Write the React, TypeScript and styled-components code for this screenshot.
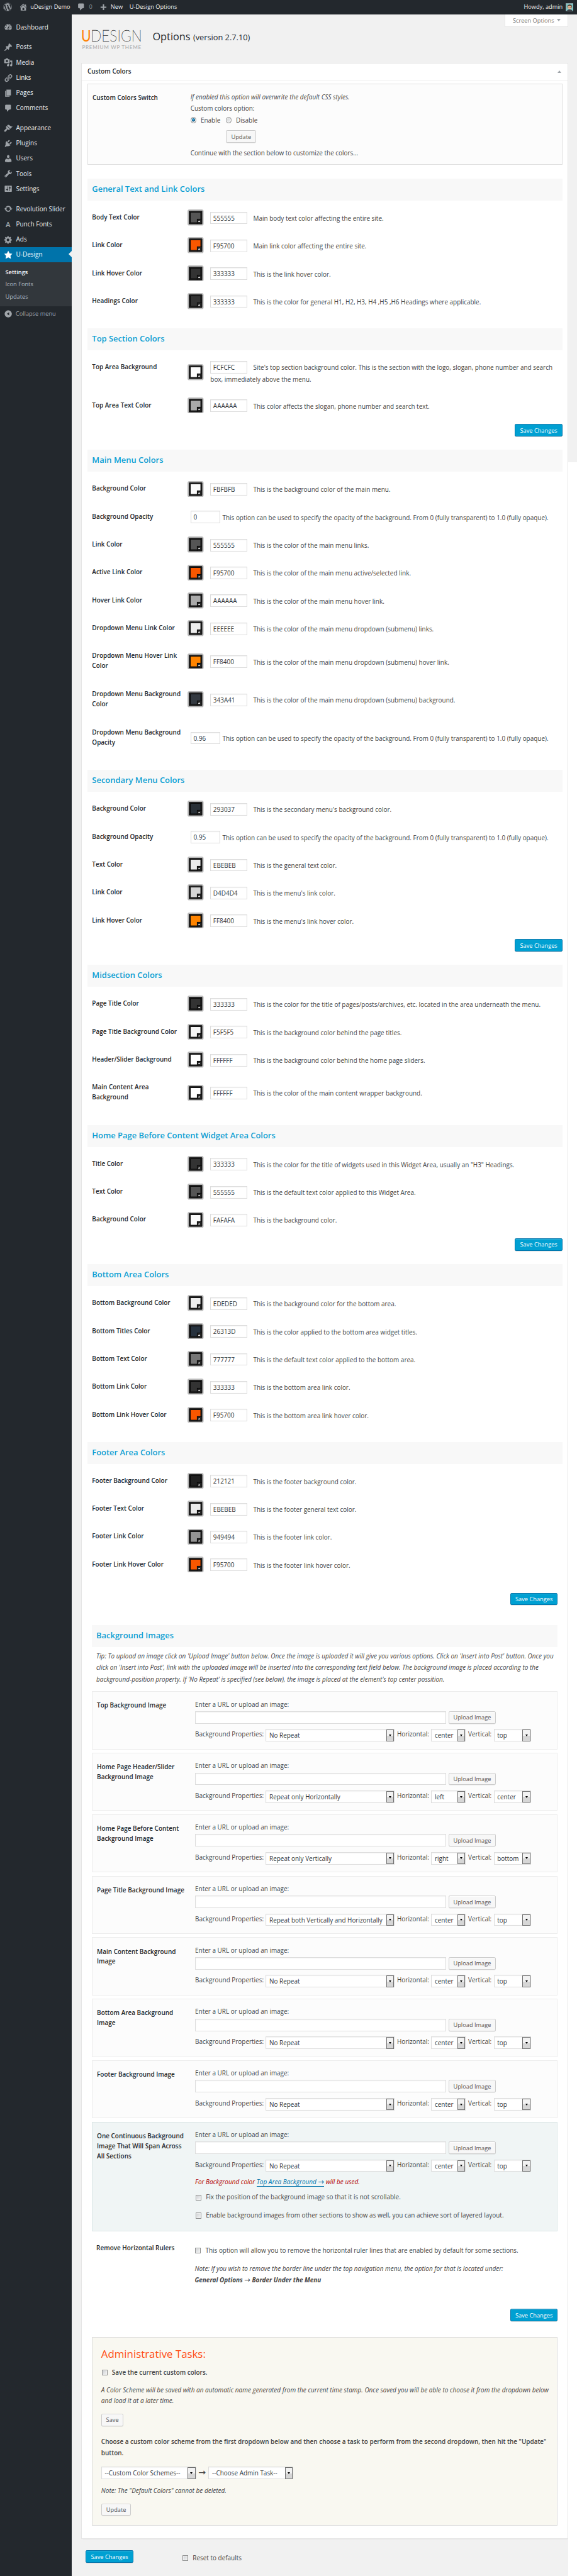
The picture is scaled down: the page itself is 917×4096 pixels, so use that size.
import React from "react";
import styled, { createGlobalStyle, css } from "styled-components";
import { FaWordpress } from "react-icons/fa";

const GlobalStyle = createGlobalStyle`
  * { box-sizing: border-box; }
  html, body { margin: 0; padding: 0; background: #fff; }
  body { overflow: hidden; }
`;

/* ---------- page frame ---------- */

const Page = styled.div`
  zoom: 0.710853;
  width: 1290px;
  height: 5762px;
  display: flex;
  flex-direction: column;
  overflow: hidden;
  background: #fff;
  color: #444;
  font-family: "Open Sans", "Liberation Sans", sans-serif;
  font-size: 14px;
  line-height: 22px;
`;

const AdminBar = styled.header`
  height: 32px;
  flex: none;
  display: flex;
  align-items: center;
  background: #23282d;
  color: #eee;
  font-size: 13px;
  line-height: 32px;
  padding: 0 8px 0 7px;
  white-space: nowrap;
`;

const BarItem = styled.div<{ $gap: number; $muted?: boolean }>`
  display: flex;
  align-items: center;
  height: 32px;
  margin-left: ${(p) => p.$gap}px;
  color: ${(p) => (p.$muted ? "#888d92" : "#eee")};
  svg { color: #9ea3a8; flex: none; }
`;

const BarSpacer = styled.div`
  flex: 1;
`;

const Avatar = styled.svg`
  margin-left: 6px;
  margin-top: 1px;
  flex: none;
`;

const Columns = styled.div`
  flex: 1;
  display: flex;
  align-items: stretch;
`;

const Sidebar = styled.nav`
  width: 160px;
  flex: none;
  padding-top: 12px;
  background: #23282d;
`;

const MenuItem = styled.div<{ $active?: boolean; $first?: boolean }>`
  position: relative;
  height: 34px;
  display: flex;
  align-items: center;
  padding-left: 8px;
  gap: 8px;
  margin-top: ${(p) => (p.$first ? 11 : 0)}px;
  color: ${(p) => (p.$active ? "#fff" : "#eee")};
  background: ${(p) => (p.$active ? "#0073aa" : "transparent")};
  white-space: nowrap;
  svg { flex: none; color: ${(p) => (p.$active ? "#fff" : "#9ea3a8")}; }
  ${(p) =>
    p.$active &&
    css`
      &::after {
        content: "";
        position: absolute;
        right: 0;
        top: 9px;
        border: 8px solid transparent;
        border-left-width: 0;
        border-right-color: #f1f1f1;
      }
    `}
`;

const LetterIcon = styled.span`
  width: 20px;
  text-align: center;
  font-size: 16px;
  font-weight: 600;
  color: #9ea3a8;
`;

const SubMenu = styled.div`
  height: 98px;
  padding: 8px 12px 0;
  background: #32373c;
  font-size: 13px;
`;

const SubItem = styled.div<{ $current?: boolean }>`
  height: 27.7px;
  line-height: 27px;
  color: ${(p) => (p.$current ? "#fff" : "#b4b9be")};
  font-weight: ${(p) => (p.$current ? 600 : 400)};
`;

const Collapse = styled.div`
  height: 34px;
  display: flex;
  align-items: center;
  gap: 7px;
  padding-left: 8px;
  font-size: 13px;
  color: #a0a5aa;
  svg { flex: none; }
`;

const Main = styled.main`
  width: 1111px;
  flex: none;
  padding-left: 22px;
  background: #f1f1f1;
`;

const Gutter = styled.div`
  flex: 1;
  &::before {
    content: "";
    display: block;
    height: 1002px;
    background: #f1f1f1;
  }
`;

const Masthead = styled.div`
  height: 109px;
  width: 1088px;
  display: flex;
  align-items: flex-start;
`;

const Logo = styled.svg`
  margin-top: 21px;
  flex: none;
`;

const Title = styled.h1`
  margin: 35px 0 0 21px;
  flex: 1;
  font-size: 23px;
  line-height: 29px;
  font-weight: 400;
  color: #23282d;
  span { font-size: 18px; }
`;

const ScreenOptions = styled.div`
  width: 142px;
  height: 29px;
  border: 1px solid #e5e5e5;
  border-top: 0;
  background: #fff;
  color: #777;
  font-size: 13px;
  line-height: 28px;
  padding-left: 17px;
  white-space: nowrap;
`;

const Arrow = styled.span<{ $up?: boolean }>`
  display: inline-block;
  width: 0;
  height: 0;
  border: 4.5px solid transparent;
  border-top: ${(p) => (p.$up ? "0" : "7px solid #a0a5aa")};
  border-bottom: ${(p) => (p.$up ? "6px solid #a0a5aa" : "0")};
  margin-left: 6px;
  vertical-align: 2px;
`;

/* ---------- panel ---------- */

const Panel = styled.section`
  width: 1088px;
  height: 5538px;
  border: 1px solid #e5e5e5;
  box-shadow: 0 1px 1px rgba(0, 0, 0, 0.04);
  background: #fff;
`;

const PanelHead = styled.div`
  height: 37px;
  display: flex;
  align-items: center;
  justify-content: space-between;
  padding: 0 14px 0 12px;
  border-bottom: 1px solid #eee;
  font-weight: 600;
  color: #23282d;
`;

const PanelBody = styled.div`
  width: 1062px;
  margin: 8px 0 0 12px;
`;

const SwitchBox = styled.div`
  height: 181.5px;
  margin-bottom: 30.5px;
  border: 1px solid #dfdfdf;
  background: #fcfcfc;
  display: flex;
`;

const Label = styled.div<{ $top?: number }>`
  width: 205px;
  flex: none;
  padding-top: ${(p) => p.$top ?? 20}px;
  line-height: 22.4px;
  font-weight: 600;
  color: #23282d;
`;

const SwitchLabel = styled(Label)`
  margin-left: 10px;
  margin-right: 14px;
`;

const SwitchBody = styled.div`
  padding-top: 15px;
  line-height: 26px;
`;

const Em = styled.div`
  font-style: italic;
  letter-spacing: 0.05px;
`;

const Radio = styled.span<{ $on?: boolean }>`
  display: inline-block;
  width: 13px;
  height: 13px;
  margin: 0 10px 0 ${(p) => (p.$on ? 0 : 12)}px;
  border: 1px solid #8e8f8f;
  border-radius: 50%;
  vertical-align: -1px;
  box-shadow: inset 0 0 0 1.5px #f4f4f4;
  background: ${(p) =>
    p.$on
      ? "radial-gradient(circle at 45% 40%, #5cc5ef 0, #1b7fb3 25%, #0b3f63 46%, #f0f0f0 58%)"
      : "linear-gradient(135deg, #cdd0d3, #f8f8f8)"};
`;

const Check = styled.span`
  display: inline-block;
  width: 13px;
  height: 13px;
  flex: none;
  margin: 0 10px 0 1px;
  border: 1px solid #8e8f8f;
  vertical-align: -1px;
  box-shadow: inset 0 0 0 1px #f4f4f4;
  background: linear-gradient(135deg, #cdd0d3, #f6f6f6);
`;

const Button = styled.button<{ $w: number; $primary?: boolean }>`
  display: block;
  flex: none;
  width: ${(p) => p.$w}px;
  height: 28px;
  padding: 0;
  border: 1px solid ${(p) => (p.$primary ? "#0073aa" : "#ccc")};
  border-radius: 3px;
  background: ${(p) => (p.$primary ? "#00a0d2" : "#f7f7f7")};
  box-shadow: ${(p) =>
    p.$primary
      ? "inset 0 1px 0 rgba(120,200,230,.5), 0 1px 0 rgba(0,0,0,.15)"
      : "inset 0 1px 0 #fff, 0 1px 0 rgba(0,0,0,.08)"};
  color: ${(p) => (p.$primary ? "#fff" : "#555")};
  font-family: inherit;
  font-size: 13px;
  line-height: 24px;
  white-space: nowrap;
`;

const SwitchButton = styled(Button)`
  margin: 10px 0 9px 80px;
`;

const SectionTitle = styled.h4<{ $indent?: number }>`
  height: 49px;
  margin: 0 0 7px;
  padding-left: ${(p) => p.$indent ?? 10.5}px;
  background: #f8f8f8;
  color: #0d9fd3;
  font-size: 18.2px;
  line-height: 47.5px;
  font-weight: 600;
`;

const Row = styled.div<{ $tall?: boolean }>`
  display: flex;
  height: ${(p) => (p.$tall ? 85.33 : 62.36)}px;
  padding-left: 10.5px;
`;

const Cell = styled.div`
  flex: 1;
  display: flex;
  align-items: center;
  padding-left: 8.5px;
`;

const CellText = styled.div<{ $opacity?: boolean }>`
  margin-top: 2px;
  margin-left: ${(p) => (p.$opacity ? 7 : 15)}px;
  flex: 1;
  line-height: 25px;
  padding-right: 10px;
`;

const Field = styled.span<{ $w: number; $gap: number }>`
  display: inline-block;
  width: ${(p) => p.$w}px;
  height: 28px;
  margin: 1px ${(p) => p.$gap}px 1px 0;
  padding-left: 5px;
  border: 1px solid #ddd;
  box-shadow: inset 0 1px 2px rgba(0, 0, 0, 0.07);
  background: #fff;
  color: #32373c;
  line-height: 26px;
  vertical-align: baseline;
`;

const SaveRow = styled.div<{ $top: number; $bottom: number }>`
  display: flex;
  justify-content: flex-end;
  margin-top: ${(p) => p.$top}px;
  margin-bottom: ${(p) => p.$bottom}px;
`;

const SectionGap = styled.div`
  height: 29.6px;
`;

/* ---------- background images ---------- */

const Inset = styled.div`
  width: 1042px;
  margin-left: 9.5px;
`;

const Tip = styled.p`
  margin: 2px 6px 15px 10.5px;
  font-style: italic;
  letter-spacing: 0.05px;
  line-height: 25.5px;
`;

const ImageBox = styled.div<{ $tint?: boolean }>`
  height: ${(p) => (p.$tint ? 245 : 130)}px;
  margin-bottom: 7.55px;
  display: flex;
  padding-left: 10.5px;
  border: 1px solid ${(p) => (p.$tint ? "#dbe6e6" : "#ececec")};
  background: ${(p) => (p.$tint ? "#f0f5f5" : "#fcfcfc")};
`;

const ImageControls = styled.div`
  flex: 1;
  padding: 16px 0 0 14.5px;
  line-height: 25px;
`;

const Line = styled.div<{ $top?: number }>`
  display: flex;
  align-items: center;
  height: 28px;
  margin-top: ${(p) => p.$top ?? 0}px;
  white-space: nowrap;
`;

const UrlField = styled(Field)`
  margin: 0 5px 0 0.5px;
`;

const Caption = styled.span<{ $w: number }>`
  width: ${(p) => p.$w}px;
  margin-top: -3px;
`;

const SelectBox = styled.span<{ $w: number; $gap?: number }>`
  display: flex;
  width: ${(p) => p.$w}px;
  height: 28px;
  margin-right: ${(p) => p.$gap ?? 5}px;
  padding-left: 6.5px;
  border: 1px solid #ddd;
  box-shadow: inset 0 1px 2px rgba(0, 0, 0, 0.07);
  background: #fff;
  color: #32373c;
  line-height: 26px;
  white-space: nowrap;
`;

const SelectText = styled.span`
  flex: 1;
`;

const SelectArrow = styled.span`
  width: 18px;
  height: 26px;
  flex: none;
  display: flex;
  align-items: center;
  justify-content: center;
  border: 1px solid #707070;
  background: linear-gradient(#f2f2f2 50%, #d6d6d6 51%);
  &::before {
    content: "";
    border: 4px solid transparent;
    border-top: 5px solid #000;
    border-bottom: 0;
  }
`;

const InlineArrow = styled.span`
  display: inline-block;
  font-family: "DejaVu Sans", sans-serif;
  font-size: 16px;
  font-style: normal;
  font-weight: 400;
  line-height: 16px;
`;

const Warning = styled.div`
  margin-top: 11px;
  font-style: italic;
  letter-spacing: 0.05px;
  color: #b00000;
  a {
    color: #0073aa;
    border-bottom: 1px solid #0073aa;
    display: inline-block;
    line-height: 17px;
  }
`;

const CheckLine = styled.div<{ $top: number }>`
  display: flex;
  align-items: center;
  height: 25px;
  margin-top: ${(p) => p.$top}px;
  white-space: nowrap;
`;

const Rulers = styled.div`
  display: flex;
  height: 166px;
  padding-left: 10.5px;
`;

const RulersBody = styled.div`
  padding: 23px 0 0 15px;
  line-height: 25px;
`;

const Note = styled.div<{ $top?: number; $bold?: boolean }>`
  margin-top: ${(p) => p.$top ?? 0}px;
  font-style: italic;
  letter-spacing: ${(p) => (p.$bold ? 0 : 0.05)}px;
  font-weight: ${(p) => (p.$bold ? 700 : 400)};
`;

/* ---------- administrative tasks ---------- */

const AdminBox = styled.div`
  height: 421.5px;
  padding: 21px 18px 0 20px;
  border: 1px solid #ddd;
  background: #f9f8f1;
  line-height: 25px;
`;

const AdminTitle = styled.h2`
  margin: 0;
  font-size: 23.7px;
  font-weight: 400;
  line-height: 30px;
  color: #ff4b12;
`;

const Strong = styled.div`
  font-weight: 600;
`;

const Arrowed = styled.span`
  width: 29px;
  margin-left: -1px;
  text-align: center;
  font-size: 20px;
  font-family: "DejaVu Sans", sans-serif;
`;

const Block = styled.div<{ $top: number }>`
  margin-top: ${(p) => p.$top}px;
`;

const FooterBar = styled.div`
  display: flex;
  align-items: flex-start;
  margin: 26px 0 0 10px;
  > div { margin: 5px 0 0 109px; }
`;

/* ---------- icons ---------- */

const glyphs: Record<string, string> = {
  dashboard:
    "M3.76 16h12.48c1.1-1.37 1.76-3.11 1.76-5 0-4.42-3.58-8-8-8s-8 3.58-8 8c0 1.89.66 3.63 1.76 5zM10 4c.55 0 1 .45 1 1s-.45 1-1 1-1-.45-1-1 .45-1 1-1zM6 6c.55 0 1 .45 1 1s-.45 1-1 1-1-.45-1-1 .45-1 1-1zm8 0c.55 0 1 .45 1 1s-.45 1-1 1-1-.45-1-1 .45-1 1-1zm-5.37 5.55L12 7v6c0 1.1-.9 2-2 2s-2-.9-2-2c0-.57.24-1.08.63-1.45zM4 10c.55 0 1 .45 1 1s-.45 1-1 1-1-.45-1-1 .45-1 1-1zm12 0c.55 0 1 .45 1 1s-.45 1-1 1-1-.45-1-1 .45-1 1-1zm-5 3c0-.55-.45-1-1-1s-1 .45-1 1 .45 1 1 1 1-.45 1-1z",
  pin: "M10.44 3.02l1.82-1.82 6.36 6.35-1.83 1.82c-1.05-.68-2.48-.57-3.41.36l-.75.75c-.92.93-1.04 2.35-.35 3.41l-1.83 1.82-2.41-2.41-2.8 2.79c-.42.42-3.38 2.71-3.8 2.29s1.86-3.39 2.28-3.81l2.79-2.79L4.1 9.36l1.83-1.82c1.05.69 2.48.57 3.4-.36l.75-.75c.93-.92 1.05-2.35.36-3.41z",
  media:
    "M13 11V4c0-.55-.45-1-1-1h-1.67L9 1H5L3.67 3H2c-.55 0-1 .45-1 1v7c0 .55.45 1 1 1h10c.55 0 1-.45 1-1zM7 4.5c1.38 0 2.5 1.12 2.5 2.5S8.38 9.5 7 9.5 4.5 8.38 4.5 7 5.62 4.5 7 4.5zM14 6h5v10.5c0 1.38-1.12 2.5-2.5 2.5S14 17.88 14 16.5s1.12-2.5 2.5-2.5c.17 0 .34.02.5.05V9h-3V6zm-4 8.05V13h2v3.5c0 1.38-1.12 2.5-2.5 2.5S7 17.88 7 16.5 8.12 14 9.5 14c.17 0 .34.02.5.05z",
  link: "M17.74 2.76c1.68 1.69 1.68 4.41 0 6.1l-1.53 1.52c-1.12 1.12-2.7 1.47-4.14 1.09l2.62-2.61.76-.77.76-.76c.84-.84.84-2.2 0-3.04-.84-.85-2.2-.85-3.04 0l-.77.76-3.38 3.38c-.37-1.44-.02-3.02 1.1-4.14l1.52-1.53c1.69-1.68 4.42-1.68 6.1 0zM8.59 13.43l5.34-5.34c.42-.42.42-1.1 0-1.52-.44-.43-1.13-.39-1.53 0l-5.33 5.34c-.42.42-.42 1.1 0 1.52.44.43 1.13.39 1.52 0zm-.76 2.29l4.14-4.15c.38 1.44.03 3.02-1.09 4.14l-1.52 1.53c-1.69 1.68-4.41 1.68-6.1 0-1.68-1.68-1.68-4.42 0-6.1l1.53-1.52c1.12-1.12 2.7-1.47 4.14-1.1l-4.14 4.15c-.85.84-.85 2.2 0 3.05.84.84 2.2.84 3.04 0z",
  page: "M6 15V2h10v13H6zm-1 1h8v2H3V5h2v11z",
  comment:
    "M5 2h9c1.1 0 2 .9 2 2v7c0 1.1-.9 2-2 2h-2l-5 5v-5H5c-1.1 0-2-.9-2-2V4c0-1.1.9-2 2-2z",
  brush:
    "M14.48 11.06L7.41 3.99l1.5-1.5c.5-.56 2.3-.47 3.51.32 1.21.8 1.43 1.28 2.91 2.1 1.18.64 2.45 1.26 4.45.85zm-.71.71L6.7 4.7 4.93 6.47c-.39.39-.39 1.02 0 1.41l1.06 1.06c.39.39.39 1.03 0 1.42-.6.6-1.43 1.11-2.21 1.69-.35.26-.7.53-1.01.84C1.43 14.23.4 16.08 1.4 17.07c.99 1 2.84-.03 4.18-1.36.31-.31.58-.66.85-1.02.57-.78 1.08-1.61 1.69-2.21.39-.39 1.02-.39 1.41 0l1.06 1.06c.39.39 1.02.39 1.41 0z",
  plug: "M13.11 4.36L9.87 7.6 8 5.73l3.24-3.24c.35-.34 1.05-.2 1.56.32.52.51.66 1.21.31 1.55zm-8 1.77l.91-1.12 9.01 9.01-1.19.84c-.71.71-2.63 1.16-3.82 1.16H6.14L4.9 17.26c-.59.59-1.54.59-2.12 0-.59-.58-.59-1.53 0-2.12l1.24-1.24v-3.88c0-1.13.4-3.19 1.09-3.89zm7.26 3.97l3.24-3.24c.34-.35 1.04-.21 1.55.31.52.51.66 1.21.31 1.55l-3.24 3.25z",
  user: "M10 9.25c-2.27 0-2.73-3.44-2.73-3.44C7 4.02 7.82 2 9.97 2c2.16 0 2.98 2.02 2.71 3.81 0 0-.41 3.44-2.68 3.44zm0 2.57L12.72 10c2.39 0 4.52 2.33 4.52 4.53v2.49s-3.65 1.13-7.24 1.13c-3.65 0-7.24-1.13-7.24-1.13v-2.49c0-2.25 1.94-4.48 4.47-4.48z",
  wrench:
    "M16.68 9.77c-1.34 1.34-3.3 1.67-4.95.99l-5.41 6.52c-.99.99-2.59.99-3.58 0s-.99-2.59 0-3.57l6.52-5.42c-.68-1.65-.35-3.61.99-4.95 1.28-1.28 3.12-1.62 4.72-1.06l-2.89 2.89 2.82 2.82 2.86-2.87c.53 1.58.18 3.39-1.08 4.65zM3.81 16.21c.4.39 1.04.39 1.43 0 .4-.4.4-1.04 0-1.43-.39-.4-1.03-.4-1.43 0-.39.39-.39 1.03 0 1.43z",
  sliders:
    "M18 16V4c0-.55-.45-1-1-1H3c-.55 0-1 .45-1 1v12c0 .55.45 1 1 1h14c.55 0 1-.45 1-1zM8 11h1c.55 0 1 .45 1 1s-.45 1-1 1H8v1.5c0 .28-.22.5-.5.5s-.5-.22-.5-.5V13H6c-.55 0-1-.45-1-1s.45-1 1-1h1V5.5c0-.28.22-.5.5-.5s.5.22.5.5V11zm5-2h-1c-.55 0-1-.45-1-1s.45-1 1-1h1V5.5c0-.28.22-.5.5-.5s.5.22.5.5V7h1c.55 0 1 .45 1 1s-.45 1-1 1h-1v5.5c0 .28-.22.5-.5.5s-.5-.22-.5-.5V9z",
  update:
    "M10.2 3.28c3.53 0 6.43 2.61 6.92 6h2.08l-3.5 4-3.5-4h2.32c-.45-1.97-2.21-3.45-4.32-3.45-1.45 0-2.73.71-3.54 1.78L4.95 5.66C6.23 4.2 8.11 3.28 10.2 3.28zm-.4 13.44c-3.52 0-6.43-2.61-6.92-6H.8l3.5-4c1.17 1.33 2.33 2.67 3.5 4H5.48c.45 1.97 2.21 3.45 4.32 3.45 1.45 0 2.73-.71 3.54-1.78l1.71 1.95c-1.28 1.46-3.15 2.38-5.25 2.38z",
  gear: "M18 12h-2.18c-.17.7-.44 1.35-.81 1.93l1.54 1.54-2.1 2.1-1.54-1.54c-.58.36-1.23.63-1.91.79V19H8v-2.18c-.68-.16-1.33-.43-1.91-.79l-1.54 1.54-2.12-2.12 1.54-1.54c-.36-.58-.63-1.23-.79-1.91H1V9.03h2.17c.16-.7.44-1.35.8-1.94L2.43 5.55l2.1-2.1 1.54 1.54c.58-.37 1.24-.64 1.93-.81V2h3v2.18c.68.16 1.33.43 1.91.79l1.54-1.54 2.12 2.12-1.54 1.54c.36.59.64 1.24.8 1.94H18V12zm-8.5 1.5c1.66 0 3-1.34 3-3s-1.34-3-3-3-3 1.34-3 3 1.34 3 3 3z",
  star: "M10 1l3 6 6 .75-4.12 4.62L16 19l-6-3-6 3 1.13-6.63L1 7.75 7 7z",
  home: "M16 8.5l1.53 1.53-1.06 1.06L10 4.6l-6.47 6.49-1.06-1.06L10 2.5l4 4v-2h2v4zm-6-2.46l6 5.99V18H4v-5.97zM12 17v-5H8v5h4z",
  plus: "M17 9v3h-5v5H9v-5H4V9h5V4h3v5h5z",
  collapse:
    "M10 2c4.42 0 8 3.58 8 8s-3.58 8-8 8-8-3.58-8-8 3.58-8 8-8zm2 4.5L7 10l5 3.5z",
};

const Icon = ({ name }: { name: string }) => (
  <svg width="20" height="20" viewBox="0 0 20 20" fill="currentColor" fillRule="evenodd">
    <path d={glyphs[name]} />
  </svg>
);

const SwatchSvg = styled.svg`
  flex: none;
`;

const Swatch = ({ color }: { color: string }) => (
  <SwatchSvg width="36" height="36" viewBox="0 0 36 36">
    <rect width="36" height="36" rx="4.5" fill="#bbb" />
    <rect x="3" y="3" width="30" height="30" rx="1.5" fill="#000" />
    <rect x="4" y="4" width="28" height="28" rx="0.5" fill="#222" />
    <rect x="6" y="6" width="24" height="24" fill="#000" />
    <rect x="7" y="7" width="22" height="22" fill={color} />
    <path d="M21 21h11v11h-11z" fill="#000" />
    <path d="M22 22h10v10h-10z" fill="#222" />
    <path d="M23.5 28l2.5-3.2 2.5 3.2z" fill="#eee" />
  </SwatchSvg>
);

/* ---------- data ---------- */

type RowData = [label: string, value: string, text: string, size?: "tall"];
type SectionData = { title: string; rows: RowData[]; save?: [number, number] };

const opacityText =
  "This option can be used to specify the opacity of the background. From 0 (fully transparent) to 1.0 (fully opaque).";

const sections: SectionData[] = [
  {
    title: "General Text and Link Colors",
    rows: [
      ["Body Text Color", "555555", "Main body text color affecting the entire site."],
      ["Link Color", "F95700", "Main link color affecting the entire site."],
      ["Link Hover Color", "333333", "This is the link hover color."],
      ["Headings Color", "333333", "This is the color for general H1, H2, H3, H4 ,H5 ,H6 Headings where applicable."],
    ],
  },
  {
    title: "Top Section Colors",
    rows: [
      [
        "Top Area Background",
        "FCFCFC",
        "Site's top section background color. This is the section with the logo, slogan, phone number and search box, immediately above the menu.",
        "tall",
      ],
      ["Top Area Text Color", "AAAAAA", "This color affects the slogan, phone number and search text."],
    ],
    save: [10.5, 30],
  },
  {
    title: "Main Menu Colors",
    rows: [
      ["Background Color", "FBFBFB", "This is the background color of the main menu."],
      ["Background Opacity", "0", opacityText],
      ["Link Color", "555555", "This is the color of the main menu links."],
      ["Active Link Color", "F95700", "This is the color of the main menu active/selected link."],
      ["Hover Link Color", "AAAAAA", "This is the color of the main menu hover link."],
      ["Dropdown Menu Link Color", "EEEEEE", "This is the color of the main menu dropdown (submenu) links."],
      ["Dropdown Menu Hover Link Color", "FF8400", "This is the color of the main menu dropdown (submenu) hover link.", "tall"],
      ["Dropdown Menu Background Color", "343A41", "This is the color of the main menu dropdown (submenu) background.", "tall"],
      ["Dropdown Menu Background Opacity", "0.96", opacityText, "tall"],
    ],
  },
  {
    title: "Secondary Menu Colors",
    rows: [
      ["Background Color", "293037", "This is the secondary menu's background color."],
      ["Background Opacity", "0.95", opacityText],
      ["Text Color", "EBEBEB", "This is the general text color."],
      ["Link Color", "D4D4D4", "This is the menu's link color."],
      ["Link Hover Color", "FF8400", "This is the menu's link hover color."],
    ],
    save: [10.5, 30],
  },
  {
    title: "Midsection Colors",
    rows: [
      ["Page Title Color", "333333", "This is the color for the title of pages/posts/archives, etc. located in the area underneath the menu."],
      ["Page Title Background Color", "F5F5F5", "This is the background color behind the page titles."],
      ["Header/Slider Background", "FFFFFF", "This is the background color behind the home page sliders."],
      ["Main Content Area Background", "FFFFFF", "This is the color of the main content wrapper background.", "tall"],
    ],
  },
  {
    title: "Home Page Before Content Widget Area Colors",
    rows: [
      ["Title Color", "333333", 'This is the color for the title of widgets used in this Widget Area, usually an "H3" Headings.'],
      ["Text Color", "555555", "This is the default text color applied to this Widget Area."],
      ["Background Color", "FAFAFA", "This is the background color."],
    ],
    save: [10.5, 30],
  },
  {
    title: "Bottom Area Colors",
    rows: [
      ["Bottom Background Color", "EDEDED", "This is the background color for the bottom area."],
      ["Bottom Titles Color", "26313D", "This is the color applied to the bottom area widget titles."],
      ["Bottom Text Color", "777777", "This is the default text color applied to the bottom area."],
      ["Bottom Link Color", "333333", "This is the bottom area link color."],
      ["Bottom Link Hover Color", "F95700", "This is the bottom area link hover color."],
    ],
  },
  {
    title: "Footer Area Colors",
    rows: [
      ["Footer Background Color", "212121", "This is the footer background color."],
      ["Footer Text Color", "EBEBEB", "This is the footer general text color."],
      ["Footer Link Color", "949494", "This is the footer link color."],
      ["Footer Link Hover Color", "F95700", "This is the footer link hover color."],
    ],
  },
];

const images: [string, string, string, string][] = [
  ["Top Background Image", "No Repeat", "center", "top"],
  ["Home Page Header/Slider Background Image", "Repeat only Horizontally", "left", "center"],
  ["Home Page Before Content Background Image", "Repeat only Vertically", "right", "bottom"],
  ["Page Title Background Image", "Repeat both Vertically and Horizontally", "center", "top"],
  ["Main Content Background Image", "No Repeat", "center", "top"],
  ["Bottom Area Background Image", "No Repeat", "center", "top"],
  ["Footer Background Image", "No Repeat", "center", "top"],
];

const menu: [string, string, boolean?][] = [
  ["dashboard", "Dashboard"],
  ["pin", "Posts", true],
  ["media", "Media"],
  ["link", "Links"],
  ["page", "Pages"],
  ["comment", "Comments"],
  ["brush", "Appearance", true],
  ["plug", "Plugins"],
  ["user", "Users"],
  ["wrench", "Tools"],
  ["sliders", "Settings"],
  ["update", "Revolution Slider", true],
  ["letter", "Punch Fonts"],
  ["gear", "Ads"],
  ["star", "U-Design"],
];

/* ---------- composed parts ---------- */

const OptionRow = ({ row }: { row: RowData }) => {
  const [label, value, text, size] = row;
  const isColor = value.length === 6;
  return (
    <Row $tall={size === "tall"}>
      <Label>{label}</Label>
      <Cell>
        {isColor && <Swatch color={`#${value}`} />}
        <CellText $opacity={!isColor}>
          <Field $w={isColor ? 83 : 66} $gap={isColor ? 13 : 5}>
            {value}
          </Field>
          {text}
        </CellText>
      </Cell>
    </Row>
  );
};

const Select = ({ w, gap, children }: { w: number; gap?: number; children: React.ReactNode }) => (
  <SelectBox $w={w} $gap={gap}>
    <SelectText>{children}</SelectText>
    <SelectArrow />
  </SelectBox>
);

const ImageFields = ({ repeat, h, v }: { repeat: string; h: string; v: string }) => (
  <>
    <div>Enter a URL or upload an image:</div>
    <Line $top={2}>
      <UrlField $w={561} $gap={5} />
      <Button $w={106}>Upload Image</Button>
    </Line>
    <Line $top={12}>
      <Caption $w={158}>Background Properties:</Caption>
      <Select w={288.5}>{repeat}</Select>
      <Caption $w={76.5}>Horizontal:</Caption>
      <Select w={77.5}>{h}</Select>
      <Caption $w={57}>Vertical:</Caption>
      <Select w={84}>{v}</Select>
    </Line>
  </>
);

export default function App() {
  return (
    <Page>
      <GlobalStyle />
      <AdminBar>
        <BarItem $gap={0}>
          <FaWordpress size={20} />
        </BarItem>
        <BarItem $gap={15}>
          <Icon name="home" />
        </BarItem>
        <BarItem $gap={6}>uDesign Demo</BarItem>
        <BarItem $gap={15}>
          <Icon name="comment" />
        </BarItem>
        <BarItem $gap={7} $muted>
          0
        </BarItem>
        <BarItem $gap={15}>
          <Icon name="plus" />
        </BarItem>
        <BarItem $gap={6}>New</BarItem>
        <BarItem $gap={15}>U-Design Options</BarItem>
        <BarSpacer />
        Howdy, admin
        <Avatar width="18" height="18" viewBox="0 0 18 18">
          <rect width="18" height="18" fill="#8c8f94" />
          <rect x="1" y="1" width="16" height="16" fill="#7fc4c4" />
          <path d="M4 7c0-5 10-5 10 0v3H4z" fill="#4a3226" />
          <path d="M5 7c2-2 6-2 8 0v3c0 5-8 5-8 0z" fill="#e9b795" />
          <path d="M3 17c1-4 11-4 12 0z" fill="#2d3036" />
          <path d="M6.5 8.5h2v1h-2zM10 8.500h2v1h-2z" fill="#333" />
        </Avatar>
      </AdminBar>
      <Columns>
        <Sidebar>
          {menu.map(([icon, text, first]) => (
            <MenuItem key={text} $first={first} $active={text === "U-Design"}>
              {icon === "letter" ? <LetterIcon>A</LetterIcon> : <Icon name={icon} />}
              {text}
            </MenuItem>
          ))}
          <SubMenu>
            <SubItem $current>Settings</SubItem>
            <SubItem>Icon Fonts</SubItem>
            <SubItem>Updates</SubItem>
          </SubMenu>
          <Collapse>
            <Icon name="collapse" />
            Collapse menu
          </Collapse>
        </Sidebar>
        <Main>
          <Masthead>
            <Logo width="138" height="68" viewBox="0 0 138 68" fontFamily="Lato, sans-serif">
              <text x="0" y="39" fontSize="35" fontWeight="400" fill="#ff8000" textLength="22" lengthAdjust="spacingAndGlyphs">
                U
              </text>
              <text x="21" y="39" fontSize="35" fontWeight="100" fill="#333" stroke="#333" strokeWidth="0.4" textLength="115" lengthAdjust="spacingAndGlyphs">
                DESIGN
              </text>
              <text x="2" y="56" fontSize="11.5" fill="#aaa" textLength="132">
                PREMIUM WP THEME
              </text>
            </Logo>
            <Title>
              Options <span>(version 2.7.10)</span>
            </Title>
            <ScreenOptions>
              Screen Options
              <Arrow />
            </ScreenOptions>
          </Masthead>
          <Panel>
            <PanelHead>
              Custom Colors
              <Arrow $up />
            </PanelHead>
            <PanelBody>
              <SwitchBox>
                <SwitchLabel>Custom Colors Switch</SwitchLabel>
                <SwitchBody>
                  <Em>If enabled this option will overwrite the default CSS styles.</Em>
                  <div>Custom colors option:</div>
                  <div>
                    <Radio $on />
                    Enable
                    <Radio />
                    Disable
                  </div>
                  <SwitchButton $w={67}>Update</SwitchButton>
                  <div>Continue with the section below to customize the colors...</div>
                </SwitchBody>
              </SwitchBox>

              {sections.map((s) => (
                <React.Fragment key={s.title}>
                  <SectionTitle>{s.title}</SectionTitle>
                  {s.rows.map((r) => (
                    <OptionRow key={r[0]} row={r} />
                  ))}
                  {s.save ? (
                    <SaveRow $top={s.save[0]} $bottom={s.save[1]}>
                      <Button $primary $w={106}>
                        Save Changes
                      </Button>
                    </SaveRow>
                  ) : (
                    <SectionGap />
                  )}
                </React.Fragment>
              ))}

              <Inset>
                <SaveRow $top={2.5} $bottom={45}>
                  <Button $primary $w={106}>
                    Save Changes
                  </Button>
                </SaveRow>
                <SectionTitle>Background Images</SectionTitle>
                <Tip>
                  Tip: To upload an image click on 'Upload Image' button below. Once the image is uploaded it will give you
                  various options. Click on 'Insert into Post' button. Once you click on 'Insert into Post', link with the
                  uploaded image will be inserted into the corresponding text field below. The background image is placed
                  according to the background-position property. If 'No Repeat' is specified (see below), the image is
                  placed at the element's top center possition.
                </Tip>
                {images.map(([label, repeat, h, v]) => (
                  <ImageBox key={label}>
                    <Label>{label}</Label>
                    <ImageControls>
                      <ImageFields repeat={repeat} h={h} v={v} />
                    </ImageControls>
                  </ImageBox>
                ))}
                <ImageBox $tint>
                  <Label>One Continuous Background Image That Will Span Across All Sections</Label>
                  <ImageControls>
                    <ImageFields repeat="No Repeat" h="center" v="top" />
                    <Warning>
                      For Background color{" "}
                      <a>
                        Top Area Background <InlineArrow>→</InlineArrow>
                      </a>{" "}
                      will be used.
                    </Warning>
                    <CheckLine $top={9}>
                      <Check />
                      Fix the position of the background image so that it is not scrollable.
                    </CheckLine>
                    <CheckLine $top={15.5}>
                      <Check />
                      Enable background images from other sections to show as well, you can achieve sort of layered layout.
                    </CheckLine>
                  </ImageControls>
                </ImageBox>
                <Rulers>
                  <Label>Remove Horizontal Rulers</Label>
                  <RulersBody>
                    <CheckLine $top={0}>
                      <Check />
                      This option will allow you to remove the horizontal ruler lines that are enabled by default for some
                      sections.
                    </CheckLine>
                    <Note $top={17}>
                      Note: If you wish to remove the border line under the top navigation menu, the option for that is
                      located under:
                    </Note>
                    <Note $bold>
                      General Options <InlineArrow>→</InlineArrow> Border Under the Menu
                    </Note>
                  </RulersBody>
                </Rulers>
                <SaveRow $top={0} $bottom={35}>
                  <Button $primary $w={106}>
                    Save Changes
                  </Button>
                </SaveRow>
                <AdminBox>
                  <AdminTitle>Administrative Tasks:</AdminTitle>
                  <CheckLine $top={15}>
                    <Check />
                    <Strong>Save the current custom colors.</Strong>
                  </CheckLine>
                  <Note $top={14}>
                    A Color Scheme will be saved with an automatic name generated from the current time stamp. Once saved
                    you will be able to choose it from the dropdown below and load it at a later time.
                  </Note>
                  <Block $top={15}>
                    <Button $w={50}>Save</Button>
                  </Block>
                  <Block $top={23}>
                    <Strong>
                      Choose a custom color scheme from the first dropdown below and then choose a task to perform from the
                      second dropdown, then hit the "Update" button.
                    </Strong>
                  </Block>
                  <Line $top={18}>
                    <Select w={212} gap={0}>
                      --Custom Color Schemes--
                    </Select>
                    <Arrowed>→</Arrowed>
                    <Select w={190}>--Choose Admin Task--</Select>
                  </Line>
                  <Note $top={14}>Note: The "Default Colors" cannot be deleted.</Note>
                  <Block $top={15}>
                    <Button $w={67}>Update</Button>
                  </Block>
                </AdminBox>
              </Inset>
            </PanelBody>
          </Panel>
          <FooterBar>
            <Button $primary $w={106}>
              Save Changes
            </Button>
            <CheckLine $top={0}>
              <Check />
              Reset to defaults
            </CheckLine>
          </FooterBar>
        </Main>
        <Gutter />
      </Columns>
    </Page>
  );
}
